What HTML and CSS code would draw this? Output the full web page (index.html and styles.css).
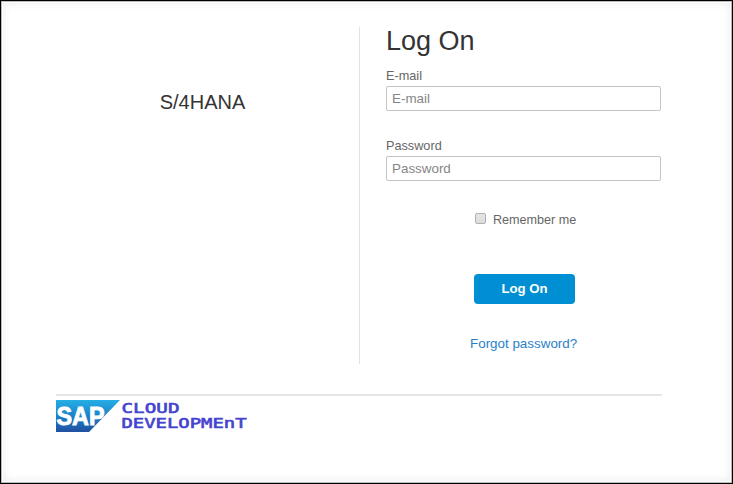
FILE: index.html
```html
<!DOCTYPE html>
<html lang="en">
<head>
<meta charset="utf-8">
<title>Log On</title>
<link rel="stylesheet" href="styles.css">
</head>
<body>
<div class="dialog">
  <main class="columns">
    <section class="product">S/4HANA</section>
    <form class="login">
      <h1 class="title">Log On</h1>
      <label class="label" for="email">E-mail</label>
      <input class="field" id="email" type="text" placeholder="E-mail">
      <label class="label label-next" for="password">Password</label>
      <input class="field" id="password" type="password" placeholder="Password">
      <label class="remember"><input class="check" type="checkbox"><span>Remember me</span></label>
      <button class="submit" type="button">Log On</button>
      <a class="forgot" href="#">Forgot password?</a>
    </form>
  </main>
  <footer class="footer">
    <svg class="logo" width="64" height="32" viewBox="0 0 64 32">
      <defs>
        <linearGradient id="blue" x1="0" y1="0" x2="0" y2="1">
          <stop offset="0" stop-color="#25aee5"/>
          <stop offset="0.5" stop-color="#1c82ca"/>
          <stop offset="1" stop-color="#2150a0"/>
        </linearGradient>
      </defs>
      <path d="M0 0H64L33 32H0Z" fill="url(#blue)"/>
      <text class="sap" x="0.5" y="25" textLength="48" lengthAdjust="spacingAndGlyphs">SAP</text>
    </svg>
    <svg class="wordmark" width="128" height="32" viewBox="0 0 128 32">
      <text class="word" x="0.5" y="13" textLength="58" lengthAdjust="spacingAndGlyphs">CLOUD</text>
      <text class="word" x="0.5" y="28" textLength="125" lengthAdjust="spacingAndGlyphs">DEVELOPMEnT</text>
    </svg>
  </footer>
</div>
</body>
</html>
```
FILE: styles.css
```css
* { box-sizing: border-box; }
body {
  margin: 0;
  background: #fff;
  font-family: "Liberation Sans", Arial, sans-serif;
  color: #666;
}
.dialog {
  height: 484px;
  padding: 26px 70px 0 55px;
  border: 1px solid #000;
  box-shadow: inset 0 0 0 1px #b8b8b8, inset 0 0 0 2px #fff, inset 0 0 8px 2px #ebebeb;
}
.columns { display: flex; height: 337px; }
.product {
  flex: none;
  width: 304px;
  padding: 63px 10px 0 0;
  border-right: 1px solid #e2e2e2;
  text-align: center;
  font-size: 20px;
  line-height: 24px;
  color: #333;
}
.login {
  display: flex;
  flex: none;
  flex-direction: column;
  width: 302px;
  padding-left: 26px;
}
.title {
  margin: -1px 0 0;
  font-size: 27px;
  font-weight: 400;
  line-height: 30px;
  color: #333;
}
.label { margin-top: 12px; font-size: 12.7px; line-height: 16px; }
.label-next { margin-top: 27px; }
.field {
  width: 275px;
  height: 25px;
  margin-top: 2px;
  padding: 0 5px 1px;
  border: 1px solid #c4c4c4;
  border-radius: 2px;
  background: #fff;
  font: 13.4px "Liberation Sans", Arial, sans-serif;
  outline: 0;
}
.field::placeholder { color: #858585; }
.remember {
  display: flex;
  gap: 7px;
  margin: 31px 0 0 89px;
  font-size: 12.6px;
  line-height: 16px;
}
.check {
  appearance: none;
  width: 11px;
  height: 11px;
  margin: 1px 0 0;
  border: 1px solid #b0b0b0;
  border-radius: 2px;
  background: linear-gradient(#e6e6e6, #dcdcdc);
}
.submit {
  width: 101px;
  height: 30px;
  margin: 46px 0 0 88px;
  padding: 0 0 1px;
  border: 0;
  border-radius: 4px;
  background: #008fd3;
  color: #fff;
  font: bold 13.2px "Liberation Sans", Arial, sans-serif;
}
.forgot {
  margin: 32px 0 0 84px;
  color: #2b80c9;
  font-size: 13.4px;
  line-height: 16px;
  text-decoration: none;
}
.footer {
  display: flex;
  width: 606px;
  margin-top: 30px;
  padding-top: 4px;
  border-top: 2px solid #e6e6e6;
}
.logo { flex: none; }
.wordmark { flex: none; margin-left: 1px; }
.sap {
  font: bold 25px "Liberation Sans", Arial, sans-serif;
  fill: #fff;
  stroke: #fff;
  stroke-width: 0.9px;
}
.word {
  font: 14px "DejaVu Sans Mono", monospace;
  fill: #4444cf;
  stroke: #4444cf;
  stroke-width: 0.6px;
}
```
